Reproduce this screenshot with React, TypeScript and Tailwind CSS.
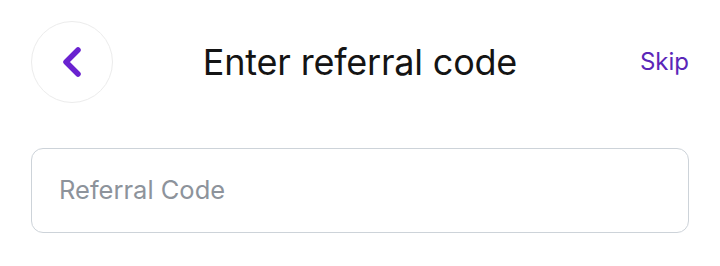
export default function App() {
  return (
    <div className="h-[266px] w-[720px] bg-white px-[31px] pt-[21px] font-['Inter',sans-serif]">
      <header className="relative flex h-[82px] items-center justify-between">
        <button
          aria-label="Back"
          className="flex h-[82px] w-[82px] items-center justify-center rounded-full border border-[#ececec] bg-white"
        >
          <svg width="30" height="40" viewBox="0 0 30 40" fill="none">
            <path
              d="M21 8 L9 20 L21 32"
              stroke="#6a22d0"
              strokeWidth="5.5"
              strokeLinecap="round"
              strokeLinejoin="round"
            />
          </svg>
        </button>
        <h1 className="absolute left-1/2 -translate-x-1/2 text-[36px] font-normal tracking-[-0.2px] text-[#141414]">
          Enter referral code
        </h1>
        <button className="text-[24px] font-normal text-[#5b26b8]">Skip</button>
      </header>
      <div className="mt-[45px] flex h-[85px] items-center rounded-[12px] border-[1.5px] border-[#cdd3d9] px-[27px]">
        <input
          placeholder="Referral Code"
          className="w-full bg-transparent text-[25.5px] text-[#222] outline-none placeholder:text-[#8d939b]"
        />
      </div>
    </div>
  );
}
